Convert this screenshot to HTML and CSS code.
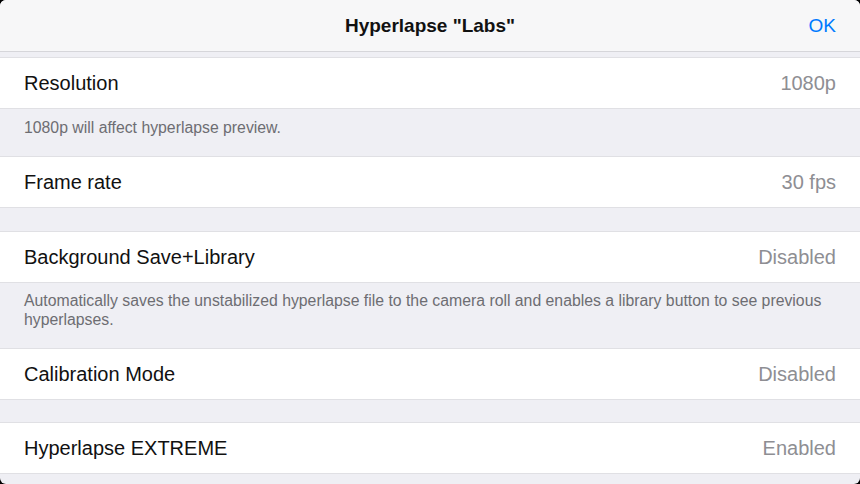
FILE: index.html
```html
<!DOCTYPE html>
<html>
<head>
<meta charset="utf-8">
<link rel="stylesheet" href="styles.css">
</head>
<body>
<div class="screen">
  <header class="navbar">
    <div class="nav-title">Hyperlapse "Labs"</div>
    <div class="nav-ok">OK</div>
  </header>
  <div class="content">
    <div class="gap gap-top"></div>
    <div class="row"><span class="label">Resolution</span><span class="value">1080p</span></div>
    <div class="footer footer-one">1080p will affect hyperlapse preview.</div>
    <div class="row"><span class="label">Frame rate</span><span class="value">30 fps</span></div>
    <div class="gap gap-mid"></div>
    <div class="row"><span class="label">Background Save+Library</span><span class="value">Disabled</span></div>
    <div class="footer footer-two">Automatically saves the unstabilized hyperlapse file to the camera roll and enables a library button to see previous hyperlapses.</div>
    <div class="row"><span class="label">Calibration Mode</span><span class="value">Disabled</span></div>
    <div class="gap gap-low"></div>
    <div class="row"><span class="label">Hyperlapse EXTREME</span><span class="value">Enabled</span></div>
  </div>
</div>
</body>
</html>
```
FILE: styles.css
```css
html, body {
  margin: 0;
  padding: 0;
  background: #000;
  width: 860px;
  height: 484px;
  overflow: hidden;
}
.screen {
  width: 860px;
  height: 484px;
  border-radius: 6px;
  overflow: hidden;
  background: #efeff4;
  font-family: "Liberation Sans", Arial, sans-serif;
  display: flex;
  flex-direction: column;
}
.navbar {
  height: 51px;
  flex: none;
  background: #f7f7f8;
  border-bottom: 1px solid #d6d6da;
  display: flex;
  align-items: center;
  justify-content: center;
  position: relative;
}
.nav-title {
  font-size: 19px;
  font-weight: bold;
  color: #111;
}
.nav-ok {
  position: absolute;
  right: 24px;
  top: 0;
  line-height: 51px;
  font-size: 19px;
  color: #007aff;
}
.content {
  display: flex;
  flex-direction: column;
}
.gap-top { height: 5px; }
.gap-mid { height: 23px; }
.gap-low { height: 22px; }
.row {
  height: 50px;
  background: #fff;
  border-top: 1px solid #e0e0e4;
  border-bottom: 1px solid #e0e0e4;
  display: flex;
  align-items: center;
  justify-content: space-between;
  padding: 1px 24px 0;
  box-sizing: content-box;
  font-size: 20px;
}
.row { height: 49px; }
.label { color: #111; }
.value { color: #8e8e93; }
.footer {
  padding: 0 24px;
  font-size: 15.8px;
  line-height: 19px;
  color: #6d6d72;
  box-sizing: border-box;
}
.footer-one {
  height: 47px;
  padding-top: 9px;
}
.footer-two {
  height: 65px;
  padding-top: 8px;
}
```
